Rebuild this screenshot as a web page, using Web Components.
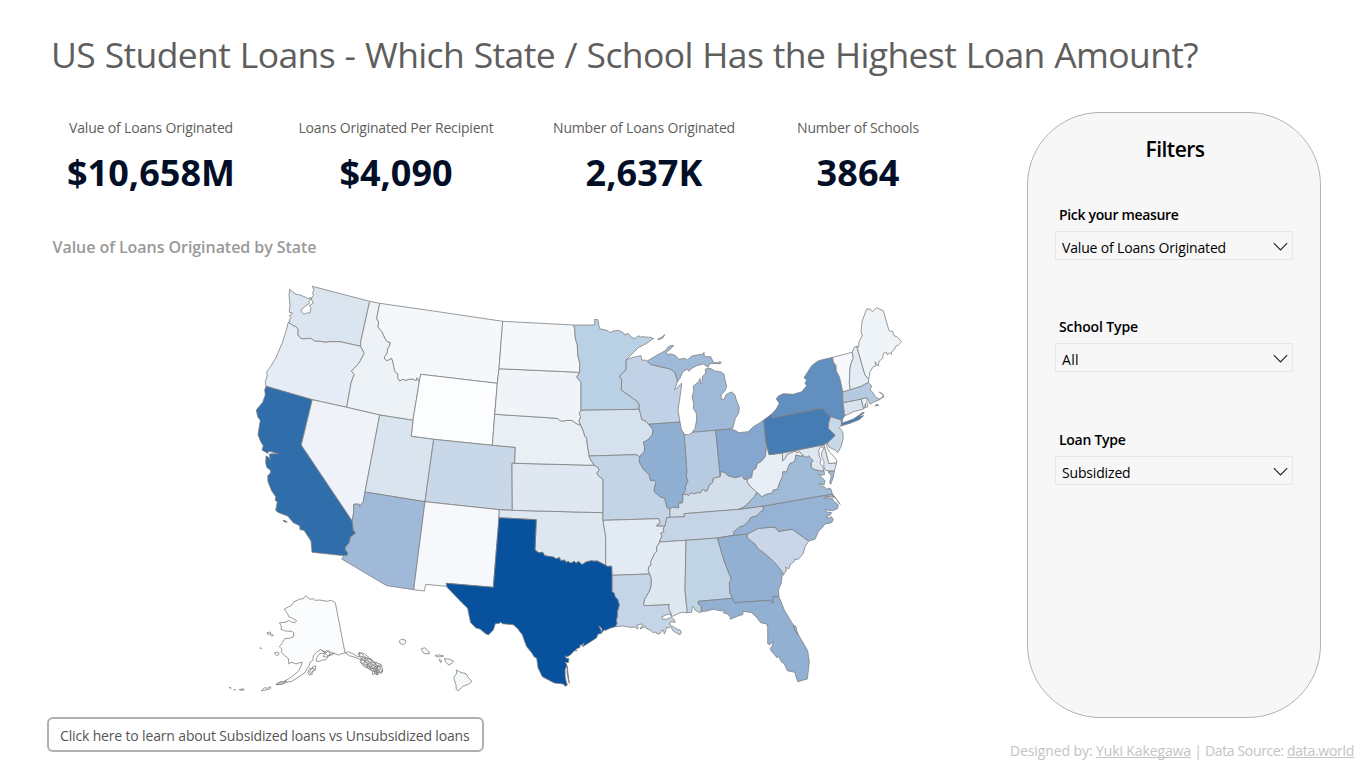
<!DOCTYPE html>
<html lang="en">
<head>
<meta charset="utf-8">
<title>US Student Loans</title>
<style>
html,body{margin:0;padding:0;background:#fff;overflow:hidden}
body{font-family:"Open Sans","Noto Sans",sans-serif}
</style>
</head>
<body>
<loan-report></loan-report>
<script>
// One line of text, tracked so that it fills the given width.
class TextLine extends HTMLElement{
  connectedCallback(){
    const r=this.attachShadow({mode:'open'});
    r.innerHTML='<style>:host{display:block;white-space:pre}span{display:inline-block;white-space:pre}</style><span><slot></slot></span>';
    const w=+this.getAttribute('width'),s=r.querySelector('span');
    if(!w)return;
    const n=this.textContent.length;
    s.style.letterSpacing=((w-s.getBoundingClientRect().width)/n).toFixed(3)+'px';
    this.style.width=w+'px';
  }
}
customElements.define('text-line',TextLine);

class KpiCard extends HTMLElement{
  connectedCallback(){
    const a=k=>this.getAttribute(k);
    this.attachShadow({mode:'open'}).innerHTML=`<style>
    :host{display:flex;flex-direction:column;align-items:center}
    .l{font-size:14px;line-height:20px;color:#605e5c;margin-left:1px}
    .v{font-size:36px;line-height:40px;font-weight:700;color:#030e27;margin:15px 0 0 1px}
    </style><text-line class="l" width="${a('lw')}">${a('label')}</text-line><text-line class="v" width="${a('vw')}">${a('value')}</text-line>`;
  }
}
customElements.define('kpi-card',KpiCard);

class FilterSelect extends HTMLElement{
  connectedCallback(){
    const a=k=>this.getAttribute(k);
    this.attachShadow({mode:'open'}).innerHTML=`<style>
    :host{display:block;width:238px}
    .l{font-size:14px;line-height:20px;font-weight:600;color:#000;margin-left:4px}
    .b{box-sizing:border-box;height:29px;margin-top:6px;border:1px solid #e8e8e8;display:flex;justify-content:space-between;padding:0 4px 0 6px}
    .v{font-size:14px;line-height:20px;color:#000;margin-top:6px}
    svg{margin-top:10px;display:block}
    </style><text-line class="l" width="${a('lw')}">${a('label')}</text-line>
    <div class="b"><text-line class="v" width="${a('vw')}">${a('value')}</text-line>
    <svg width="15" height="10"><path d="M.8 1.2 7.5 8 14.2 1.2" fill="none" stroke="#222" stroke-width="1.1"/></svg></div>`;
  }
}
customElements.define('filter-select',FilterSelect);

// Arc table: name | tile | points. Points are thirds of a pixel from the tile origin.
const TILES={a:[240,275],b:[240,430],c:[220,585],d:[430,500],e:[480,300],f:[620,420],g:[740,295],h:[740,400],i:[640,530],j:[570,425]};
const ARCS=`wa_coast|a|145,142 150,140 147,135 153,128 148,122 157,117 156,113 149,113 148,108 150,90 147,60 149,43 155,48 168,58 180,60 195,66 208,72 210,67 214,72 206,80 209,84 198,92 186,102 184,110 192,118 202,113 209,115 213,98 207,92 214,88 220,85 217,78 214,72 216,66 220,62 218,52 222,45 217,34
wa_top|a|217,34 389,79
wa_id|a|389,79 362,200 362,214
wa_or|a|362,214 300,200 270,200 255,202 240,199 225,199 212,190 190,192 182,190 173,180 174,163 168,155 160,152 152,147 145,142
or_id|a|362,214 373,235 357,264 343,280 334,288 343,298 338,310 333,325 320,397
or_coast|a|145,142 137,172 127,203 107,250 92,274 80,290 82,302 76,320 78,334
or_ca|a|78,334 217,374
or_nv|a|217,374 320,397
id_top|a|389,79 419,85
id_mt|a|419,85 410,130 416,142 414,156 426,170 435,190 442,200 451,202 449,212 443,222 441,236 433,246 434,252 441,257 455,250 459,262 462,278 465,290 474,297 473,308 479,318 488,313 498,316 510,312 522,313 527,318 531,308 538,320
id_wy|a|538,320 519,436
mt_wy|a|538,320 542,298 772,325
id_ut|a|519,436 419,420
id_nv|a|419,420 320,397
mt_top|a|419,85 600,111 788,139
mt_nd|a|788,139 777,281
mt_sd|a|777,281 772,325
wy_sd|a|772,325 764,419
wy_ne|a|764,419 757,511
wy_co|a|757,511 581,493
wy_ut|a|581,493 514,484 519,436
ut_co|a|581,493 555,680
ut_nv|a|419,420 375,651
ut_az|b|375,186 555,215
nv_az|b|375,186 370,215 360,229 356,222 341,223 341,245 337,273
nv_ca|b|337,273 184,45 217,-91
ca_coast|b|78,-131 74,-120 76,-105 68,-83 56,-69 49,-60 53,-40 61,-29 57,-5 54,14 62,35 70,47 66,60 76,66 84,70 86,64 100,67 116,72 100,71 88,72 91,90 86,82 78,78 77,98 80,112 92,122 91,130 83,137 84,155 95,183 107,200 106,211 112,216 107,241 113,247 143,258 160,278 179,287 180,299 192,301 213,333 216,367 312,377
ca_az|b|312,377 322,376 323,366 317,362 316,352 327,340 332,320 347,310 340,300 337,273
catalina|b|129,271 136,272 142,276 133,276 129,271
az_south|b|312,377 305,387 440,467 521,479
az_nm|b|521,479 555,215
nm_south|b|521,479 553,483 557,463 619,469 619,460
nm_tx|b|619,460 760,472 777,263
nm_ok|b|777,263 778,239
nm_co|b|778,239 555,215
co_ne|e|37,436 106,442 104,490
co_ks|d|246,-110 247,31
co_ok|d|247,31 208,29
ks_ok|d|247,31 519,38
ok_tx|d|206,53 319,59 315,150 326,158 338,157 344,167 370,171 376,175 384,176 386,171 390,176 392,182 404,180 408,187 415,184 420,189 426,188 432,183 438,190 444,185 448,186 456,194 468,186 484,182 495,184 500,182 515,190 527,196
ok_ar|d|527,196 527,110 519,61
ok_mo|d|519,61 519,38
tx_ar|d|527,196 532,199 545,199 546,226
tx_la|d|546,226 546,275 553,280 555,290 563,298 568,316 562,335 562,350 559,360 561,370 556,380
tx_coast|d|556,380 540,385 527,391 522,390 515,398 512,393 517,388 512,382 506,378 512,388 515,400 503,403 500,413 490,420 458,440 462,428 455,436 450,434 450,442 437,448 441,452 433,452 421,465 412,470 405,467 408,474 417,476 415,488 406,487 411,496 405,510 406,530 409,545 412,555 406,559 400,552 373,549 337,530 324,503 320,475 312,470 305,458 290,440 286,430 277,404 263,386 250,374 217,371 212,366 208,370 196,371 190,390 176,404 168,402 150,387 138,384 122,368 118,350 113,325 96,308 51,262 49,250
padre|d|412,498 414,520 418,550 414,535 411,515 412,498
ks_ne|e|104,490 343,496
ks_mo|j|73,121 85,128 88,135 80,145 88,155 99,163 99,262
nd_top|e|68,64 280,75
nd_mn|e|280,75 284,85 286,115 292,135 293,165 299,190 299,217
nd_sd|e|57,206 299,217
sd_mn|e|299,217 290,232 303,247 303,331
sd_ia|e|303,331 298,340 302,350 297,362 302,376
sd_ne|e|45,343 232,355 238,360 245,364 262,361 275,361 290,371 302,376
ne_ia|e|302,376 309,390 315,410 320,413 322,435 328,468
ne_mo|j|57,93 62,105 73,121
mn_ia|e|303,331 478,328
mn_top|e|280,75 344,75 344,58 354,59 357,78 359,86 384,92 390,98 400,93 415,91 430,98 434,105 444,100 455,112 464,116 475,107 482,111 490,110 505,112 514,112 517,117 521,115 500,130 475,143 455,163 439,179
mn_wi|e|439,179 438,210 424,222 419,230 425,238 424,270 450,288 460,296 470,302 477,312 478,328
ia_wi|e|478,328 482,343 485,358 500,365 506,373
ia_il|e|506,373 519,389 517,405 503,420 490,427 494,440 493,455 483,465 480,470
ia_mo|e|480,470 475,468 468,464 328,468
wi_top|e|439,179 460,172 483,167 485,180 497,181 502,183
wi_mi|e|502,183 511,193 545,201 572,207 577,212 586,218 588,232 592,235 592,245
wi_lake|e|592,245 588,258 583,270 592,263 604,250 605,254 600,290 594,330 600,366
wi_il|e|600,366 506,373
up_lake|e|502,183 530,166 556,152 565,140 575,136 581,137 568,150 558,157 562,163 575,162 588,168 596,178 607,176 613,175 622,180 635,168 655,164 670,162 672,157 673,170 692,170 697,180 703,188 715,188 720,184 724,188 720,191 705,190 687,192 685,202 670,192 650,197 632,207 628,214 622,208 608,215 600,235 592,245
isle|e|533,118 545,112 554,104 549,113 538,119 533,118
mi_lake|e|637,397 645,385 650,360 649,340 640,325 641,310 636,290 641,275 640,258 656,245 660,235 662,253 665,252 668,228 677,220 676,207 690,205 705,213 724,216 732,223 735,240 740,258 735,272 723,285 724,298 732,298 738,285 745,280 755,276 765,285 769,300 778,322 776,340 766,355 762,370 758,385 751,387
mi_oh|e|751,387 707,391
mi_in|e|707,391 637,397
in_lake|e|637,397 625,405 613,402
il_lake|e|613,402 604,388 600,366
il_in|f|193,42 201,155 199,170 204,183 196,200 197,210 188,224
il_ky|f|188,224 189,240 186,250 176,248 176,264 157,262 150,268
il_mo|f|60,110 58,125 70,147 88,165 92,182 103,180 108,187 103,207 103,215 120,230 134,235 138,250 140,262 150,268
mo_ky|f|150,268 150,292
mo_tn|f|150,292 140,293 138,305 135,318
mo_ar|j|285,304 259,303 264,297 270,293 266,281 102,286
in_oh|f|287,31 301,170
in_ky|f|301,170 280,175 278,188 268,195 262,212 255,214 250,207 240,220 235,217 222,222 215,218 205,227 200,223 188,224
oh_ky|f|301,170 302,155 315,158 323,167 345,173 360,170 365,166 372,178 382,178
oh_wv|f|382,178 395,172 398,152 408,145 412,132 425,123 436,110 440,75 437,60
oh_pa|f|437,60 431,0
oh_lake|f|287,31 331,27 348,32 356,38 385,35 400,20 420,8 431,0
wv_pa|f|437,60 447,104 487,99
md_pa|f|487,99 612,74
pa_de|f|612,74 625,67
pa_nj|h|265,127 272,120 286,106 275,95 265,85 266,68 272,50
pa_ny|h|272,50 258,38 249,25 95,54 95,42
pa_lake|h|95,42 71,60
wv_md|f|487,99 488,122 495,116 500,105 515,97 525,93 532,98 538,94 550,107
wv_va|f|550,107 542,108 527,105 525,120 520,127 510,130 504,142 500,155 488,155 487,170 478,190 472,208 460,210 455,220 440,222 425,230 415,220 410,217
wv_ky|f|410,217 390,198 382,186 382,178
va_ky|f|410,217 405,228 395,238 380,255 370,262 357,268
va_tn|f|357,268 430,258
va_nc|f|430,258 637,222
md_va|f|550,107 560,112 566,107 572,115 580,122 574,127 574,142 582,148 600,152 612,153
va_coast|f|612,153 614,163 605,166 595,162 605,172 615,182 612,195 597,190 605,198 615,202 622,210 625,204 633,207 637,222
md_bay|f|612,153 608,140 600,130 603,120 598,108 596,92 600,82 609,80 611,88 604,97 606,112 612,125 611,138 615,150 624,152 643,153 650,128
de_md|f|650,128 627,131 612,74
de_coast|f|612,74 616,70 620,74 622,85 628,95 640,108 650,120 650,128
shore|f|624,155 643,153 640,172 632,193 629,187 634,168 624,155
nc_coast|f|637,222 643,232 632,230 615,230 612,237 620,232 638,236 640,243 650,250 655,254 653,265 640,272 625,271 615,267 620,276 635,278 630,285 618,290 626,294 634,290 640,298 635,308 615,312 605,325 595,335 585,358 566,363
banks|f|637,222 661,253 658,250 637,222
nc_sc|f|566,363 517,328 475,334 465,321 415,325 405,330 382,342
nc_ga|f|382,342 341,346
nc_tn|f|341,346 342,335 360,320 370,318 385,305 392,293 410,288 420,277 430,271 430,258
tn_ky|f|150,292 193,290 193,281 357,268
tn_ms|f|120,366 198,361
tn_al|f|198,361 292,354
tn_ga|f|292,354 341,346
tn_ar|j|285,304 280,310 282,320 272,325 277,333 270,345 268,352
ms_ar|i|60,36 50,50 50,65 42,72 40,80 32,95 33,105 26,110 25,122 29,132
ar_la|d|659,222 546,226
la_ms|i|29,132 34,145 34,165 30,180 19,200 14,208 11,222 13,227 88,223 86,235 93,250 95,260
la_coast|i|95,260 90,252 80,254 66,260 67,267 80,268 92,262 102,268 105,277 92,275 88,283 100,290 112,298 120,300 124,308 120,314 113,311 100,303 92,290 85,294 79,291 78,300 73,312 70,300 65,302 60,311 52,312 48,306 40,308 30,300 18,295 17,288 12,292 0,297 5,288 10,286 4,282 -10,286 -5,293 -8,297 -15,291 -30,292 -50,288 -74,290
ms_coast|i|95,260 110,253 125,247 142,248
ms_al|i|138,31 135,180 142,248
al_ga|i|232,24 255,100 263,120 274,147 268,160 270,190 277,205
al_fl|i|277,205 175,214 175,221 184,230 184,245
al_coast|i|142,248 155,247 157,230 161,232 165,240 180,248 184,245
fl_coast|i|184,245 200,243 220,238 240,242 256,243 250,248 262,252 272,262 270,268 300,256 308,254 310,244 335,248 348,260 362,278 380,282 383,292 383,340 388,345 400,335 397,348 391,355 393,362 412,384 417,376 420,388 425,397 432,400 442,422 464,427 473,455 502,447 504,430 508,395 503,362 470,305 460,285 433,240 417,200
canav|i|460,285 468,290 473,314 464,300 460,285
fl_ga|i|277,205 284,218 390,211 397,220 400,218 398,200 417,200
ga_coast|i|417,200 415,180 424,160 426,140 431,133
ga_sc|i|431,133 422,120 415,110 402,95 370,67 355,57 345,42 322,24 322,12
sc_coast|i|431,133 440,120 436,112 447,116 450,105 465,92 463,88 475,88 490,70 495,50 506,33
ny_lake|g|95,357 109,342 118,325 109,312 115,303 130,296 160,298 185,290 200,272 195,265 200,255 192,248 215,212 235,197 278,187
ny_vt|g|278,187 280,200 288,212 289,228 298,245 303,265 308,290
ny_ma|g|308,290 309,323
ny_ct|g|309,323 314,362
ny_south|g|314,362 308,372 305,390 303,375
ny_nj|h|303,60 272,50
nj_coast|h|303,60 305,75 298,83 308,95 310,115 303,140 293,158 285,150 268,142 262,132 265,127
island|h|303,78 306,69 322,64 340,57 355,47 368,37 373,38 358,49 371,47 357,59 330,70 303,78
vt_top|g|278,187 337,172
vt_nh|g|337,172 340,190 332,208 330,220 328,265 331,284
vt_ma|g|331,284 308,290
nh_top|g|337,172 342,157 350,154
nh_me|g|350,154 375,240 386,252
nh_coast|g|386,252 385,263
nh_ma|g|385,263 375,267 365,273 331,284
me_coast|g|350,154 356,157 357,140 367,122 363,110 366,80 380,42 390,42 397,50 410,38 430,47 447,107 458,110 462,122 472,126 485,140 475,150 468,153 462,165 454,172 455,178 450,173 442,180 440,172 430,175 428,190 418,198 414,213 405,200 408,213 400,215 390,230 386,252
ma_coast|g|385,263 395,272 390,285 398,292 408,308 418,312 432,305 427,296 418,292 428,297 429,302 422,312 412,317 403,320 390,328 382,310
ma_ri|g|382,310 377,308 364,312
ma_ct|g|364,312 309,323
ri_coast|g|382,310 380,320 384,335 376,338 377,325 372,341
ct_ri|g|364,312 371,342
ct_coast|g|371,342 340,350 325,358 314,362
vin|g|404,333 411,328 417,331 404,333
ak_main|c|375,203 346,53 335,46 320,49 300,45 285,46 280,41 270,43 257,32 250,41 240,42 222,50 214,62 205,66 193,72 202,85 207,96 215,98 222,103 230,107 225,113 213,111 208,106 196,112 178,113 184,122 183,133 196,138 215,139 221,143 220,156 208,160 195,160 188,172 178,185 186,193 184,200 191,210 205,220 206,236 216,232 228,237 236,234 247,232 243,243 236,257 222,270 205,282 190,290 175,294 168,299 185,298 200,292 215,289 228,281 245,270 256,262 260,252 268,242 270,232 279,225 280,212 290,202 303,193 308,198 315,200 320,197 328,200 340,205 355,210 375,203
ak_pan|c|375,203 385,200 398,206 410,213 420,216 417,203 424,205 435,216 450,222 460,232 474,243 470,255 470,270 460,258 448,252 440,245 425,234 422,224 405,217 388,212 375,203
hi1|c|538,168 544,163 556,165 557,173 551,179 541,176 538,168
hi2|c|603,192 614,188 625,198 629,206 612,206 603,192
hi3|c|646,211 658,210 671,213 660,216 648,215 646,211
hi4|c|657,223 666,228 662,233 657,223
hi5|c|673,221 687,222 701,229 696,235 686,240 677,231 673,221
hi6|c|709,255 722,262 738,266 745,278 756,289 746,298 729,304 715,317 709,314 708,299 701,278 710,265 709,255
ak_a|c|141,143 151,141 152,146 160,151 155,154 149,147 142,148 141,143
ak_b|c|163,204 174,201 177,207 170,212 163,204
ak_c|c|264,262 269,250 277,252 280,244 288,243 286,255 276,260 277,268 268,270 264,262
ak_d|c|124,317 134,308 141,310 152,305 150,312 136,315 124,317
ak_e|c|168,299 180,291 200,289 185,297 168,299
ak_f|c|29,306 33,308 32,311 29,309 29,306
ak_f2|c|41,314 46,314 44,315 41,314
ak_g|c|58,313 72,312 72,315 60,316 58,313
ak_h|c|120,188 124,189 122,192 120,188
ak_i|c|290,218 300,205 314,205 309,215 322,216 330,207 318,224 306,225 300,229 289,229 290,218
ak_n|c|305,196 318,204 325,197 331,208 343,204 335,210 322,212 316,205 305,196
ak_o|c|268,262 276,248 284,252 272,266 268,262
ak_j|c|414,205 430,204 448,218 466,232 482,238 488,252 485,265 472,262 475,270 465,265 459,270 456,257 444,250 430,243 420,230 426,222 414,205
ak_k|c|424,214 439,224 433,230 448,236 440,242 457,244 450,250 468,252 462,260 479,255 466,245 480,246 464,238 470,233 452,233 455,226 438,218 424,214
ak_l|c|430,226 446,228 452,240 465,240 468,250 480,262 466,260 458,246 441,246 444,236 430,226
ak_m|c|474,240 484,241 480,252 489,258 480,262 470,250 474,240
ak_p|c|421,222 436,228 430,236 446,240 452,252 460,249 463,262 473,268 468,256 460,240 447,231 440,221 421,222`;
const STATES=`#dae5ef wa_coast wa_top wa_id wa_or
#e5ecf5 or_coast or_ca or_nv or_id wa_or
#ecf2f6 id_top id_mt id_wy id_ut id_nv or_id wa_id
#f4f8fb mt_top mt_nd mt_sd mt_wy id_mt
#fcfdfe mt_wy wy_sd wy_ne wy_co wy_ut id_wy
#2f6dab ca_coast ca_az nv_ca or_ca
#2f6dab catalina
#eff3f9 or_nv id_nv ut_nv nv_az nv_ca
#d9e4ef id_ut wy_ut ut_co ut_az ut_nv
#a0b9d8 ut_az az_nm az_south ca_az nv_az
#c9d8e8 wy_co co_ne co_ks co_ok nm_co ut_co
#f7f8fc nm_south nm_tx nm_ok nm_co az_nm
#dde7f0 co_ok ks_ok ok_mo ok_ar ok_tx nm_ok
#dfe8f0 ks_ne ks_mo ks_ok co_ks
#e8f0f5 sd_ne ne_ia ne_mo ks_ne co_ne wy_ne
#f0f3f8 nd_sd sd_mn sd_ia sd_ne wy_sd mt_sd
#f5f8fb nd_top nd_mn nd_sd mt_nd
#bad0e4 mn_top mn_wi mn_ia sd_mn nd_mn
#d5e2ee mn_ia ia_wi ia_il ia_mo ne_ia sd_ia
#c4d4e7 ia_mo il_mo mo_ky mo_tn mo_ar ok_mo ks_mo ne_mo
#e2eaf3 mo_ar tn_ar ms_ar ar_la tx_ar ok_ar
#c5d5e8 ar_la la_ms la_coast tx_la
#08519c ok_tx tx_ar tx_la tx_coast nm_tx
#08519c padre
#c1d2e6 wi_top wi_mi wi_lake wi_il ia_wi mn_wi
#9fb9d9 up_lake wi_mi
#9fb9d9 isle
#9fb9d9 mi_lake mi_oh mi_in
#8fafd3 wi_il il_lake il_in il_ky il_mo ia_il
#b6cbe1 mi_in in_oh in_ky il_in in_lake
#85a7cf oh_lake oh_pa oh_wv oh_ky in_oh
#d2dfeb in_ky oh_ky wv_ky va_ky tn_ky mo_ky il_ky
#c5d5e7 tn_ky va_tn nc_tn tn_ga tn_al tn_ms tn_ar mo_tn
#dee8f0 tn_ms ms_al ms_coast la_ms ms_ar
#c1d4e5 tn_al al_ga al_fl al_coast ms_al
#92b0d2 tn_ga nc_ga ga_sc ga_coast fl_ga al_ga
#92b0d2 fl_ga fl_coast al_fl
#92b0d2 canav
#c9d6e9 nc_sc sc_coast ga_sc
#96b3d5 va_nc nc_coast nc_sc nc_ga nc_tn
#96b3d5 banks
#9fbbd8 md_va va_coast va_nc va_tn va_ky wv_va
#9fbbd8 shore
#e8eef6 wv_pa wv_md wv_va wv_ky oh_wv
#dde6f1 md_pa de_md md_bay md_va wv_md
#fafbfd de_coast de_md
#608fc0 ny_lake ny_vt ny_ma ny_ct ny_south ny_nj pa_ny
#467cb4 pa_lake pa_ny pa_nj pa_de md_pa wv_pa oh_pa
#c7d8e9 ny_nj nj_coast pa_nj
#467fb8 island
#d8e3ee ma_ct ct_ri ct_coast ny_ct
#eaf1f6 ma_ri ri_coast ct_ri
#b5cae1 vt_ma nh_ma ma_coast ma_ri ma_ct ny_ma
#b5cae1 vin
#f7f8fd vt_top vt_nh vt_ma ny_vt
#e3ebf4 nh_top nh_me nh_coast nh_ma vt_nh
#eff4f8 me_coast nh_me
#fafcfe ak_main
#fafcfe ak_pan
#f5f8fb hi1
#f5f8fb hi2
#f5f8fb hi3
#f5f8fb hi4
#f5f8fb hi5
#f5f8fb hi6
none ak_a
none ak_b
none ak_c
none ak_d
none ak_e
none ak_f
none ak_f2
none ak_g
none ak_h
none ak_i
none ak_n
none ak_o
none ak_j
none ak_k
none ak_l
none ak_m
none ak_p`;
class UsMap extends HTMLElement{
  connectedCallback(){
    const arcs={};
    for(const line of ARCS.split('\n')){
      const [n,t,p]=line.split('|'),[ox,oy]=TILES[t];
      arcs[n]=p.split(' ').map(q=>{const [x,y]=q.split(',');return [(ox+x/3).toFixed(1),(oy+y/3).toFixed(1)]});
    }
    const dist=(p,q)=>Math.hypot(p[0]-q[0],p[1]-q[1]);
    const paths=STATES.split('\n').map(line=>{
      const [fill,...ns]=line.split(' ');
      // Chain the arcs end to end, turning each one to meet its neighbour.
      const list=ns.map(n=>arcs[n].slice());
      if(list.length>2){
        const m=list[1],d=p=>Math.min(dist(p,m[0]),dist(p,m.at(-1)));
        if(d(list[0][0])<d(list[0].at(-1)))list[0].reverse();
      }
      let end=list[0].at(-1);
      for(const l of list.slice(1)){if(dist(end,l.at(-1))<dist(end,l[0]))l.reverse();end=l.at(-1)}
      return `<path fill="${fill}" d="M${list.flat().map(p=>p.join(' ')).join('L')}Z"/>`;
    }).join('');
    this.attachShadow({mode:'open'}).innerHTML=`<style>:host{display:block}svg{display:block}path{stroke:#808080;stroke-width:.8;stroke-linejoin:round}</style>
    <svg width="700" height="425" viewBox="220 275 700 425">${paths}</svg>`;
  }
}
customElements.define('us-map',UsMap);

class FilterPanel extends HTMLElement{
  connectedCallback(){
    this.attachShadow({mode:'open'}).innerHTML=`<style>
    :host{display:flex;flex-direction:column;align-items:center;box-sizing:border-box;width:294px;height:606px;border:1px solid #b3b3b3;border-radius:73px;background:#f7f7f7;padding-top:21px}
    h2{margin:0 0 41px 2px;font-size:21px;line-height:30px;font-weight:600;color:#000}
    .list{display:flex;flex-direction:column;gap:57px}
    </style><h2><text-line width="59">Filters</text-line></h2><div class="list"><slot></slot></div>`;
  }
}
customElements.define('filter-panel',FilterPanel);

class LoanReport extends HTMLElement{
  connectedCallback(){
    this.attachShadow({mode:'open'}).innerHTML=`<style>
    :host{display:block;width:1367px;height:768px;box-sizing:border-box;padding-top:34px;background:#fff;overflow:hidden}
    h1{margin:0 0 38px 51px;font-size:35.5px;line-height:40px;font-weight:400;color:#605e5c;white-space:nowrap;word-spacing:1px}
    main{display:flex}
    .left{width:1000px}
    .right{width:367px;display:flex;flex-direction:column}
    .kpis{display:flex;padding:6px 0 0 67px}
    h3{margin:44px 0 18px 52.5px;font-size:16px;line-height:20px;font-weight:600;color:#999}
    us-map{margin-left:220px}
    button{display:block;box-sizing:border-box;margin:17px 0 0 47px;width:437px;height:35px;border:2px solid #b0b0b0;border-radius:6px;background:#fff;padding:2px 0 0 11px;font:14px/20px "Open Sans",sans-serif;color:#555}
    filter-panel{margin-left:27px}
    filter-select:last-child{margin-top:1px}
    footer{display:flex;align-self:flex-end;margin:23px 13px 0 0;font-size:14px;line-height:20px;color:#c4c4c4}
    footer a{box-sizing:border-box;height:17px;border-bottom:1px solid #c4c4c4}
    </style>
    <h1><text-line width="1147">US Student Loans - Which State / School Has the Highest Loan Amount?</text-line></h1>
    <main><div class="left">
      <div class="kpis">
        <kpi-card style="width:167px" label="Value of Loans Originated" lw="164" value="$10,658M" vw="168"></kpi-card>
        <kpi-card style="width:195px;margin-left:64px" label="Loans Originated Per Recipient" lw="195" value="$4,090" vw="113"></kpi-card>
        <kpi-card style="width:181px;margin-left:60px" label="Number of Loans Originated" lw="182" value="2,637K" vw="117"></kpi-card>
        <kpi-card style="width:121px;margin-left:63px" label="Number of Schools" lw="122" value="3864" vw="83"></kpi-card>
      </div>
      <h3><text-line width="264">Value of Loans Originated by State</text-line></h3>
      <us-map></us-map>
      <button><text-line width="409.5">Click here to learn about Subsidized loans vs Unsubsidized loans</text-line></button>
    </div><div class="right">
      <filter-panel>
        <filter-select label="Pick your measure" lw="119.5" value="Value of Loans Originated" vw="164"></filter-select>
        <filter-select label="School Type" lw="79" value="All" vw="17"></filter-select>
        <filter-select label="Loan Type" lw="66.5" value="Subsidized" vw="68.5"></filter-select>
      </filter-panel>
      <footer><text-line width="86">Designed by: </text-line><a><text-line width="95">Yuki Kakegawa</text-line></a><text-line width="96"> | Data Source: </text-line><a><text-line width="67">data.world</text-line></a></footer>
    </div></main>`;
  }
}
customElements.define('loan-report',LoanReport);
</script>
</body>
</html>
